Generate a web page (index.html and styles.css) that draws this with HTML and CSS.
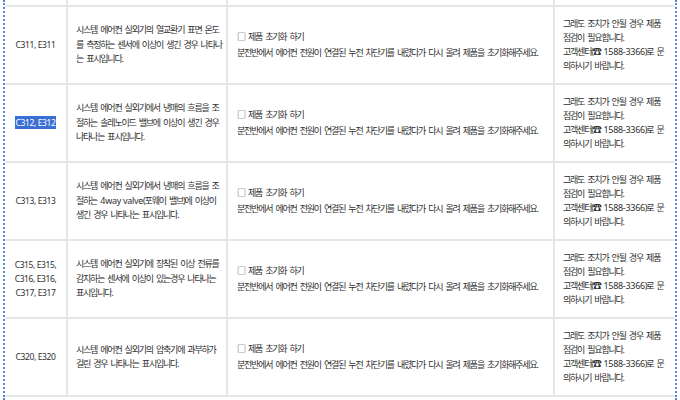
FILE: index.html
```html
<!DOCTYPE html>
<html lang="ko">
<head>
<meta charset="utf-8">
<link rel="stylesheet" href="styles.css">
</head>
<body>
<div class="frame">
  <div class="row row-partial">
    <div class="cell"></div><div class="cell"></div><div class="cell"></div><div class="cell"></div>
  </div>

  <div class="row">
    <div class="cell code"><div>C311, E311</div></div>
    <div class="cell desc"><div>시스템 에어컨 실외기의 열교환기 표면 온도<br>를 측정하는 센서에 이상이 생긴 경우 나타나<br>는 표시입니다.</div></div>
    <div class="cell action"><div>□ 제품 초기화 하기<br>분전반에서 에어컨 전원이 연결된 누전 차단기를 내렸다가 다시 올려 제품을 초기화해주세요.</div></div>
    <div class="cell note"><div>그래도 조치가 안될 경우 제품<br>점검이 필요합니다.<br>고객센터(<span class="latin">☎ 1588-3366</span>)로 문<br>의하시기 바랍니다.</div></div>
  </div>

  <div class="row">
    <div class="cell code"><div><span class="selected">C312, E312</span></div></div>
    <div class="cell desc"><div>시스템 에어컨 실외기에서 냉매의 흐름을 조<br>절하는 솔레노이드 밸브에 이상이 생긴 경우<br>나타나는 표시입니다.</div></div>
    <div class="cell action"><div>□ 제품 초기화 하기<br>분전반에서 에어컨 전원이 연결된 누전 차단기를 내렸다가 다시 올려 제품을 초기화해주세요.</div></div>
    <div class="cell note"><div>그래도 조치가 안될 경우 제품<br>점검이 필요합니다.<br>고객센터(<span class="latin">☎ 1588-3366</span>)로 문<br>의하시기 바랍니다.</div></div>
  </div>

  <div class="row">
    <div class="cell code"><div>C313, E313</div></div>
    <div class="cell desc"><div>시스템 에어컨 실외기에서 냉매의 흐름을 조<br>절하는 <span class="latin">4way valve</span>(포웨이 밸브)에 이상이<br>생긴 경우 나타나는 표시입니다.</div></div>
    <div class="cell action"><div>□ 제품 초기화 하기<br>분전반에서 에어컨 전원이 연결된 누전 차단기를 내렸다가 다시 올려 제품을 초기화해주세요.</div></div>
    <div class="cell note"><div>그래도 조치가 안될 경우 제품<br>점검이 필요합니다.<br>고객센터(<span class="latin">☎ 1588-3366</span>)로 문<br>의하시기 바랍니다.</div></div>
  </div>

  <div class="row">
    <div class="cell code"><div>C315, E315,<br>C316, E316,<br>C317, E317</div></div>
    <div class="cell desc"><div>시스템 에어컨 실외기에 장착된 이상 전류를<br>감지하는 센서에 이상이 있는경우 나타나는<br>표시입니다.</div></div>
    <div class="cell action"><div>□ 제품 초기화 하기<br>분전반에서 에어컨 전원이 연결된 누전 차단기를 내렸다가 다시 올려 제품을 초기화해주세요.</div></div>
    <div class="cell note"><div>그래도 조치가 안될 경우 제품<br>점검이 필요합니다.<br>고객센터(<span class="latin">☎ 1588-3366</span>)로 문<br>의하시기 바랍니다.</div></div>
  </div>

  <div class="row">
    <div class="cell code"><div>C320, E320</div></div>
    <div class="cell desc"><div>시스템 에어컨 실외기의 압축기에 과부하가<br>걸린 경우 나타나는 표시입니다.</div></div>
    <div class="cell action"><div>□ 제품 초기화 하기<br>분전반에서 에어컨 전원이 연결된 누전 차단기를 내렸다가 다시 올려 제품을 초기화해주세요.</div></div>
    <div class="cell note"><div>그래도 조치가 안될 경우 제품<br>점검이 필요합니다.<br>고객센터(<span class="latin">☎ 1588-3366</span>)로 문<br>의하시기 바랍니다.</div></div>
  </div>
</div>
</body>
</html>
```

FILE: styles.css
```css
html, body {
  margin: 0;
  padding: 0;
  background: #ffffff;
}

body {
  font-family: "Noto Sans", "Noto Sans CJK KR", sans-serif;
  color: #2e2e2e;
  height: 400px;
  overflow: hidden;
}

.frame {
  margin: 0 3px;
  height: 400px;
  border-left: 2px dotted #4f8bd6;
  border-right: 2px dotted #4f8bd6;
}

.row {
  display: grid;
  grid-template-columns: 63px 160px 327px 1fr;
  height: 76px;
  border-bottom: 2px solid #e6e6e6;
}

.row-partial {
  height: 5px;
}

.cell {
  border-right: 2px solid #e6e6e6;
  display: flex;
  flex-direction: column;
  justify-content: center;
  white-space: nowrap;
  overflow: hidden;
}

.cell:last-child {
  border-right: none;
}

.code {
  text-align: center;
  font-size: 8.5px;
  letter-spacing: -0.4px;
  line-height: 14px;
}

.selected {
  background: #3b6fd4;
  color: #ffffff;
  line-height: 16px;
  padding: 1px 1px;
}

.desc,
.action,
.note {
  font-size: 9px;
  letter-spacing: -1.22px;
  word-spacing: 2px;
  line-height: 14.4px;
}

.latin {
  letter-spacing: -0.3px;
  word-spacing: 0;
}

.desc {
  padding-left: 8px;
}

.action {
  padding-left: 9px;
  line-height: 16px;
}

.note {
  padding-left: 8px;
  line-height: 14px;
}
```
